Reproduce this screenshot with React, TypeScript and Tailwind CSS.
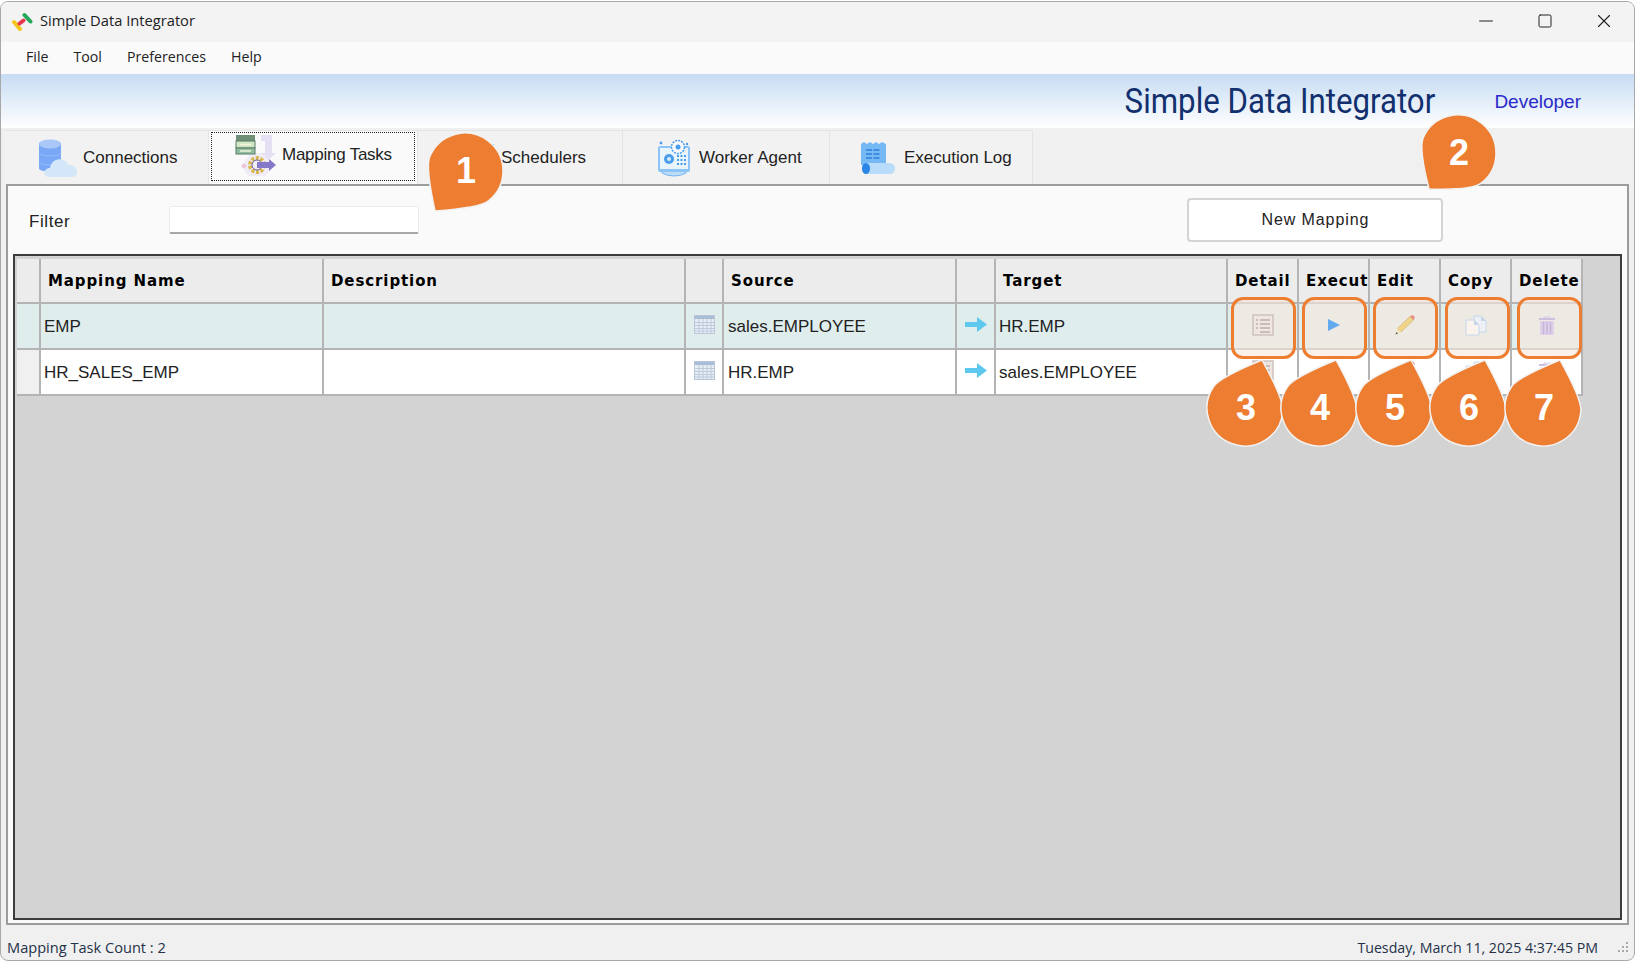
import { Minus, Square, X } from 'lucide-react';
import type { ReactNode } from 'react';

const sans = 'font-["Liberation_Sans",Arial,sans-serif]';
const ui = 'font-["Open_Sans",sans-serif]';

function LogoIcon() {
    return (
        <svg width="22" height="20" viewBox="0 0 22 20" className="shrink-0">
            <path d="M3 11 L9 18" stroke="#f5c518" strokeWidth="4" strokeLinecap="round" />
            <path d="M8.5 12.5 L12.5 9.5" stroke="#e8384f" strokeWidth="4" strokeLinecap="round" />
            <path d="M13.5 4 L19.5 10.5" stroke="#26a65b" strokeWidth="4" strokeLinecap="round" />
        </svg>
    );
}

function ConnectionsIcon() {
    return (
        <svg width="42" height="40" viewBox="0 0 42 40">
            <path d="M1 6 C1 1 23 1 23 6 V30 C23 35 1 35 1 30 Z" fill="#7aa8f6" />
            <ellipse cx="12" cy="6" rx="11" ry="4.5" fill="#a9c8f8" />
            <path d="M1 15 C4 19 20 19 23 15 M1 24 C4 28 20 28 23 24" stroke="#94b9f7" strokeWidth="1.2" fill="none" />
            <path d="M12 39 C4 39 5 30 12 30 C13 20 27 18 30 27 C39 25 43 39 34 39 Z" fill="#d3e7f8" />
        </svg>
    );
}

function MappingIcon() {
    return (
        <svg width="42" height="42" viewBox="0 0 42 42">
            <path d="M26 1 H37 V19 H41 L32 27 L24 19 H30 V7 H26 Z" fill="#e6e0f5" />
            <circle cx="22" cy="32" r="13" fill="#f0ecf8" />
            <rect x="1" y="1" width="19" height="6" fill="#6f8f76" />
            <rect x="1" y="7" width="19" height="7" fill="#cfe6c5" stroke="#5d7a68" />
            <rect x="1" y="14" width="19" height="6" fill="#8fbf9f" stroke="#5d7a68" />
            <path d="M5 10.5 H16 M5 17 H16" stroke="#f4f4d8" strokeWidth="1.5" />
            <circle cx="22" cy="31" r="7" fill="none" stroke="#d8b84e" strokeWidth="4" strokeDasharray="3 1.5" />
            <circle cx="22" cy="31" r="5" fill="none" stroke="#6a5d9e" />
            <path d="M22 28 H34 V25 L41 31 L34 37 V34 H22 Z" fill="#8678c8" />
            <path d="M6 32 L9 29 L12 32 L9 35 Z" fill="#ecc6d6" />
        </svg>
    );
}

function SchedulerIcon() {
    return (
        <svg width="36" height="36" viewBox="0 0 36 36">
            <rect x="2" y="4" width="32" height="30" rx="2" fill="#d6e9fb" />
            <rect x="2" y="4" width="32" height="7" fill="#6ab0f2" />
        </svg>
    );
}

function WorkerIcon() {
    return (
        <svg width="34" height="38" viewBox="0 0 34 38">
            <path d="M5 32 H29 V34 Q24 37 17 37 Q10 37 5 34 Z" fill="#bcdcf8" stroke="#60a8ee" strokeWidth="0.8" />
            <rect x="1" y="7" width="32" height="26" rx="2" fill="#8cc4f7" />
            <rect x="3" y="9" width="28" height="21" fill="#eaf4fd" />
            <circle cx="12" cy="20" r="5" fill="#4a9cec" />
            <circle cx="12" cy="20" r="2" fill="#d9ecfc" />
            <path d="M20 17 H29 M20 21 H29 M20 25 H29" stroke="#4a9cec" strokeWidth="2" strokeDasharray="2 1.5" />
            <circle cx="21" cy="8" r="6.5" fill="#fafafa" stroke="#4a9cec" strokeWidth="1.5" strokeDasharray="2 1" />
            <circle cx="21" cy="8" r="2.5" fill="#4a9cec" />
            <circle cx="30" cy="5" r="1.2" fill="#4a9cec" />
            <circle cx="4" cy="4" r="1.4" fill="#4a9cec" />
        </svg>
    );
}

function LogIcon() {
    return (
        <svg width="36" height="34" viewBox="0 0 36 34">
            <path d="M1 3 L4 1 L7 3 L10 1 L13 3 L16 1 L19 3 L22 1 L26 3 V24 H1 Z" fill="#76b8f4" />
            <path d="M6 9 H21 M6 13 H21 M6 17 H21" stroke="#2c7fd8" strokeWidth="1.6" strokeDasharray="6 1.5" />
            <rect x="2" y="22" width="33" height="11" rx="5.5" fill="#b9dcfb" />
            <ellipse cx="6" cy="27.5" rx="4" ry="5.5" fill="#2a85e5" />
        </svg>
    );
}

function TableIcon() {
    return (
        <svg width="21" height="19" viewBox="0 0 21 19" className="shrink-0">
            <rect x="0.5" y="0.5" width="20" height="18" fill="#e8edf4" stroke="#b8c6d8" />
            <rect x="1" y="1" width="19" height="3" fill="#a9bdd6" />
            <path d="M1 7.5 H20 M1 10.5 H20 M1 13.5 H20 M1 16 H20 M5 4 V18 M9 4 V18 M13 4 V18 M17 4 V18" stroke="#bccadc" strokeWidth="1" />
        </svg>
    );
}

function ArrowIcon() {
    return (
        <svg width="22" height="15" viewBox="0 0 22 15" className="shrink-0">
            <path d="M0 5 H12 V0 L22 7.5 L12 15 V10 H0 Z" fill="#5ec8ee" />
        </svg>
    );
}

function DetailIcon() {
    return (
        <svg width="22" height="22" viewBox="0 0 22 22">
            <rect x="1" y="1" width="20" height="20" fill="#efe6e2" stroke="#c9bab6" strokeWidth="1.3" />
            <path d="M4 6 H6 M8 6 H18 M4 10 H6 M8 10 H18 M4 14 H6 M8 14 H18 M8 18 H18" stroke="#bfb0ac" strokeWidth="1.4" />
        </svg>
    );
}

function PlayIcon() {
    return (
        <svg width="14" height="14" viewBox="0 0 14 14">
            <path d="M1 1 L13 7 L1 13 Z" fill="#62aaf0" />
        </svg>
    );
}

function PencilIcon() {
    return (
        <svg width="20" height="20" viewBox="0 0 20 20">
            <path d="M15 1.5 L18.5 5 L6 17 L2.5 13.5 Z" fill="#f0d48a" stroke="#c8a860" strokeWidth="0.6" />
            <path d="M15 1.5 L16.5 0.5 Q18 0 19 1.2 Q20 2.5 19.5 3.5 L18.5 5 Z" fill="#e88a80" />
            <path d="M2.5 13.5 L6 17 L0.5 19.5 Z" fill="#f3e2bf" />
            <path d="M0.5 19.5 L1.5 17 L3 18.5 Z" fill="#55504a" />
        </svg>
    );
}

function CopyIcon() {
    return (
        <svg width="22" height="21" viewBox="0 0 22 21">
            <path d="M9 1 H16 L21 6 V17 H9 Z" fill="#edf1f6" stroke="#c6d6ea" />
            <path d="M16 1 V6 H21 Z" fill="#c6d6ea" />
            <path d="M1 5 H9 L14 10 V20 H1 Z" fill="#fbf4ee" stroke="#c6d6ea" />
            <path d="M9 5 V10 H14 Z" fill="#c6d6ea" />
        </svg>
    );
}

function TrashIcon() {
    return (
        <svg width="18" height="20" viewBox="0 0 18 20">
            <path d="M6 2 H12 V4 H6 Z" fill="none" stroke="#d5c8e2" />
            <rect x="1" y="3" width="16" height="2" fill="#cdbfdd" />
            <path d="M2 6 H16 V20 H2 Z" fill="#ddd0e8" />
            <path d="M5.5 7 V19 M9 7 V19 M12.5 7 V19" stroke="#c4b4d8" strokeWidth="1.4" />
        </svg>
    );
}

function GripIcon() {
    return (
        <svg width="14" height="14" viewBox="0 0 14 14" className="shrink-0" fill="#a8a8a8">
            <rect x="10" y="1" width="2" height="2" />
            <rect x="6" y="5" width="2" height="2" />
            <rect x="10" y="5" width="2" height="2" />
            <rect x="2" y="9" width="2" height="2" />
            <rect x="6" y="9" width="2" height="2" />
            <rect x="10" y="9" width="2" height="2" />
        </svg>
    );
}

const tabs = [
    { label: 'Connections', icon: <ConnectionsIcon />, box: 'w-[204px] pl-[33px] gap-[3px]' },
    { label: 'Mapping Tasks', icon: <MappingIcon />, box: 'w-[209px] pl-[26px] gap-[5px] tracking-[-0.25px]', active: true },
    { label: 'Schedulers', icon: <SchedulerIcon />, box: 'w-[205px] pl-[42px] gap-[5px]' },
    { label: 'Worker Agent', icon: <WorkerIcon />, box: 'w-[207px] pl-[34px] gap-[8px]' },
    { label: 'Execution Log', icon: <LogIcon />, box: 'w-[203px] pl-[30px] gap-[8px]' },
];

const columns = 'grid grid-cols-[24px_283px_362px_38px_233px_39px_232px_71px_71px_71px_71px_71px]';

const heads = ['', 'Mapping Name', 'Description', '', 'Source', '', 'Target', 'Detail', 'Execut', 'Edit', 'Copy', 'Delete'];

const rows = [
    { name: 'EMP', source: 'sales.EMPLOYEE', target: 'HR.EMP', bg: 'bg-[#e0eded]' },
    { name: 'HR_SALES_EMP', source: 'HR.EMP', target: 'sales.EMPLOYEE', bg: 'bg-white' },
];

const actions = [<DetailIcon />, <PlayIcon />, <PencilIcon />, <CopyIcon />, <TrashIcon />];

const highlights = [
    'left-[1231px]',
    'left-[1302px]',
    'left-[1373px]',
    'left-[1445px]',
    'left-[1517px]',
];

const pins = [
    { n: '1', box: 'left-[390px] top-[96px]', dx: -30, dy: 40 },
    { n: '2', box: 'left-[1383px] top-[78px]', dx: -29, dy: 36 },
    { n: '3', box: 'left-[1170px] top-[333px]', dx: 17, dy: -48 },
    { n: '4', box: 'left-[1244px] top-[333px]', dx: 17, dy: -48 },
    { n: '5', box: 'left-[1319px] top-[333px]', dx: 17, dy: -48 },
    { n: '6', box: 'left-[1393px] top-[333px]', dx: 17, dy: -48 },
    { n: '7', box: 'left-[1468px] top-[333px]', dx: 17, dy: -48 },
];

// teardrop around a circle of r=38, point at (dx, dy) from the middle,
// the sides leave the circle 75deg either side of the point
function dropPath(dx: number, dy: number) {
    const r = 38;
    const angle = Math.atan2(dy, dx);
    const spread = (75 * Math.PI) / 180;
    const at = (a: number) => [Math.cos(a) * r, Math.sin(a) * r];
    const [ax, ay] = at(angle + spread);
    const [bx, by] = at(angle - spread);
    const t = 0.3;
    const c1x = ax + Math.sin(angle + spread) * r * t;
    const c1y = ay - Math.cos(angle + spread) * r * t;
    const c2x = bx - Math.sin(angle - spread) * r * t;
    const c2y = by + Math.cos(angle - spread) * r * t;
    return `M${ax} ${ay} Q${c1x} ${c1y} ${dx} ${dy} Q${c2x} ${c2y} ${bx} ${by} A${r} ${r} 0 1 0 ${ax} ${ay} Z`;
}

function Pin({ n, box, dx, dy }: { n: string; box: string; dx: number; dy: number }) {
    return (
        <div className={`absolute z-20 w-[150px] h-[150px] flex items-center justify-center ${box}`}>
            <svg width="150" height="150" viewBox="-75 -75 150 150" className="absolute inset-0">
                <path d={dropPath(dx, dy)} fill="#ed7d31" stroke="#f2f2f2" strokeWidth="1.5" />
            </svg>
            <span className={`relative ml-[2px] text-white font-bold text-[36px] leading-none ${sans}`}>{n}</span>
        </div>
    );
}

function HeadCell({ children }: { children: ReactNode }) {
    return (
        <div className="h-[45px] border-r-2 border-b-2 border-[#b4b4b4] bg-[#ececec] flex items-center pl-[7px] pt-[2px] overflow-hidden whitespace-nowrap font-bold text-[15px] tracking-[0.9px] text-black font-['DejaVu_Sans',sans-serif]">
            {children}
        </div>
    );
}

export default function App() {
    return (
        <div className="relative w-[1635px] h-[961px] overflow-hidden bg-white">
            <div className="flex flex-col h-[960px] mt-px border border-[#a8a8a8] rounded-lg overflow-hidden bg-[#f0f0f0]">
                <div className="h-[40px] shrink-0 bg-[#f3f3f3] flex items-center pl-[10px] pb-[3px]">
                    <LogoIcon />
                    <span className={`ml-[7px] text-[14.7px] text-[#222] ${ui}`}>Simple Data Integrator</span>
                    <div className="ml-auto flex items-center gap-[40px] pr-[19px] text-[#222]">
                        <Minus size={22} strokeWidth={1.2} />
                        <Square size={16} strokeWidth={1.5} />
                        <X size={22} strokeWidth={1.2} />
                    </div>
                </div>

                <div className={`h-[32px] shrink-0 bg-[#fafafa] flex items-center pl-[25px] pb-[3px] gap-[25px] text-[14.2px] text-[#222] ${ui}`}>
                    <span>File</span>
                    <span>Tool</span>
                    <span>Preferences</span>
                    <span>Help</span>
                </div>

                <div className="h-[54px] shrink-0 bg-gradient-to-b from-[#c6dcf3] to-[#ffffff] flex items-center justify-end pr-[53px]">
                    <span className="text-[35px] leading-none scale-x-[0.892] origin-right text-[#12306e] font-['Roboto',sans-serif]">Simple Data Integrator</span>
                    <span className={`ml-[59px] mt-[2px] text-[19px] text-[#2a2ac8] ${sans}`}>Developer</span>
                </div>

                <div className="h-[56px] shrink-0 flex items-end pl-[4px] pt-[2px] bg-[#f0f0f0]">
                    {tabs.map((tab) => (
                        <div
                            key={tab.label}
                            className={`relative h-[54px] flex items-center border-r border-t border-[#e4e4e4] whitespace-nowrap text-[17px] text-[#222] ${sans} ${tab.box} ${tab.active ? 'bg-[#fafafa] pb-[6px]' : 'bg-[#f2f2f2]'}`}
                        >
                            {tab.active && <div className="absolute left-[2px] right-[2px] top-[1px] bottom-[3px] border border-dotted border-[#222]" />}
                            {tab.icon}
                            <span>{tab.label}</span>
                        </div>
                    ))}
                </div>

                <div className="flex-1 min-h-0 mx-[5px] border-2 border-[#9c9c9c] bg-[#fafafa] flex flex-col">
                    <div className="h-[68px] shrink-0 flex items-start">
                        <span className={`ml-[21px] mt-[27px] text-[17px] tracking-[0.6px] text-[#222] leading-none ${sans}`}>Filter</span>
                        <div className="ml-[99px] mt-[20px] w-[250px] h-[28px] bg-white border border-[#ececec] border-b-2 border-b-[#a8a8a8] rounded-[2px]" />
                        <div className={`ml-[768px] mt-[12px] w-[256px] h-[44px] bg-white border-2 border-[#d4d4d4] rounded-[4px] flex items-center justify-center text-[16px] tracking-[0.9px] text-[#222] ${sans}`}>
                            New Mapping
                        </div>
                    </div>

                    <div className="flex-1 min-h-0 mx-[5px] mb-[3px] border-2 border-[#3c3c3c] bg-[#d3d3d3] pl-[2px] pt-[3px]">
                        <div className={columns}>
                            {heads.map((head, i) => (
                                <HeadCell key={i}>{head}</HeadCell>
                            ))}
                        </div>
                        {rows.map((row, r) => (
                            <div key={row.name} className={`${columns} h-[46px] text-[17px] text-[#222] ${sans}`}>
                                <div className={`border-r-2 border-b-2 border-[#b4b4b4] ${r === 0 ? row.bg : 'bg-[#f0f0f0]'}`} />
                                <div className={`border-r-2 border-b-2 border-[#b4b4b4] flex items-center pl-[3px] pt-[1px] ${row.bg}`}>{row.name}</div>
                                <div className={`border-r-2 border-b-2 border-[#b4b4b4] ${row.bg}`} />
                                <div className={`border-r-2 border-b-2 border-[#b4b4b4] flex items-center justify-center pb-[3px] ${row.bg}`}>
                                    <TableIcon />
                                </div>
                                <div className={`border-r-2 border-b-2 border-[#b4b4b4] flex items-center pl-[4px] pt-[1px] ${row.bg}`}>{row.source}</div>
                                <div className={`border-r-2 border-b-2 border-[#b4b4b4] flex items-center justify-center pb-[3px] ${row.bg}`}>
                                    <ArrowIcon />
                                </div>
                                <div className={`border-r-2 border-b-2 border-[#b4b4b4] flex items-center pl-[3px] pt-[1px] ${row.bg}`}>{row.target}</div>
                                {actions.map((icon, i) => (
                                    <div key={i} className={`border-r-2 border-b-2 border-[#b4b4b4] flex items-center justify-center pb-[2px] ${row.bg}`}>
                                        <div className="relative z-10 flex">{icon}</div>
                                    </div>
                                ))}
                            </div>
                        ))}
                    </div>
                </div>

                <div className={`h-[35px] shrink-0 flex items-center pl-[6px] pr-[4px] pt-[10px] text-[#26324a] ${ui}`}>
                    <span className="text-[14.6px]">Mapping Task Count : 2</span>
                    <span className="ml-auto mr-[18px] text-[14.2px]">Tuesday, March 11, 2025 4:37:45 PM</span>
                    <GripIcon />
                </div>
            </div>

            {highlights.map((left) => (
                <div key={left} className={`absolute z-[5] top-[297px] w-[65px] h-[62px] border-[3px] border-[#ed7d31] rounded-[12px] bg-[#f5e8dc]/60 ${left}`} />
            ))}
            {pins.map((pin) => (
                <Pin key={pin.n} {...pin} />
            ))}
        </div>
    );
}
